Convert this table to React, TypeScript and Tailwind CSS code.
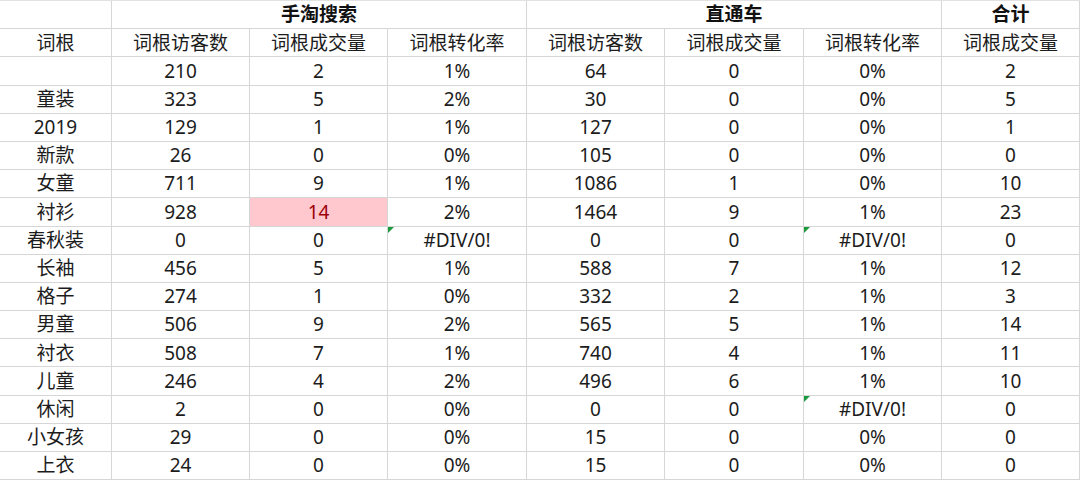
import React from "react";

type Row = [string, string, string, string, string, string, string, string];

const rows: Row[] = [
  ["", "210", "2", "1%", "64", "0", "0%", "2"],
  ["童装", "323", "5", "2%", "30", "0", "0%", "5"],
  ["2019", "129", "1", "1%", "127", "0", "0%", "1"],
  ["新款", "26", "0", "0%", "105", "0", "0%", "0"],
  ["女童", "711", "9", "1%", "1086", "1", "0%", "10"],
  ["衬衫", "928", "14", "2%", "1464", "9", "1%", "23"],
  ["春秋装", "0", "0", "#DIV/0!", "0", "0", "#DIV/0!", "0"],
  ["长袖", "456", "5", "1%", "588", "7", "1%", "12"],
  ["格子", "274", "1", "0%", "332", "2", "1%", "3"],
  ["男童", "506", "9", "2%", "565", "5", "1%", "14"],
  ["衬衣", "508", "7", "1%", "740", "4", "1%", "11"],
  ["儿童", "246", "4", "2%", "496", "6", "1%", "10"],
  ["休闲", "2", "0", "0%", "0", "0", "#DIV/0!", "0"],
  ["小女孩", "29", "0", "0%", "15", "0", "0%", "0"],
  ["上衣", "24", "0", "0%", "15", "0", "0%", "0"],
];

const subHeads = ["词根", "词根访客数", "词根成交量", "词根转化率", "词根访客数", "词根成交量", "词根转化率", "词根成交量"];

const cell = "flex items-center justify-center border-r border-b border-[#d6d6d6] relative";

function Flag() {
  return (
    <span className="absolute left-0 top-0 w-0 h-0 border-t-[6px] border-t-[#1a9a3c] border-r-[6px] border-r-transparent" />
  );
}

export default function App() {
  return (
    <div
      className="w-[1080px] h-[481px] bg-white overflow-hidden text-[19px] text-[#1c1c1c]"
      style={{ fontFamily: '"Noto Sans", "Noto Sans CJK SC", sans-serif' }}
    >
      <div className="grid grid-cols-[112px_138px_138px_139px_138px_139px_138px_138px] auto-rows-[28.2px] border-t border-[#e2e2e2]">
        {/* top header */}
        <div className={cell} />
        <div className={`${cell} col-span-3 font-bold text-[#111]`}>手淘搜索</div>
        <div className={`${cell} col-span-3 font-bold text-[#111]`}>直通车</div>
        <div className={`${cell} font-bold text-[#111]`}>合计</div>

        {subHeads.map((h, i) => (
          <div key={"h" + i} className={cell}>
            {h}
          </div>
        ))}

        {rows.map((r, ri) =>
          r.map((v, ci) => {
            const bad = ri === 5 && ci === 2;
            const flag = v === "#DIV/0!";
            return (
              <div
                key={ri + "-" + ci}
                className={`${cell} ${bad ? "bg-[#ffc7ce] text-[#9c0006]" : ""}`}
              >
                {flag && <Flag />}
                {v}
              </div>
            );
          })
        )}
      </div>
    </div>
  );
}
